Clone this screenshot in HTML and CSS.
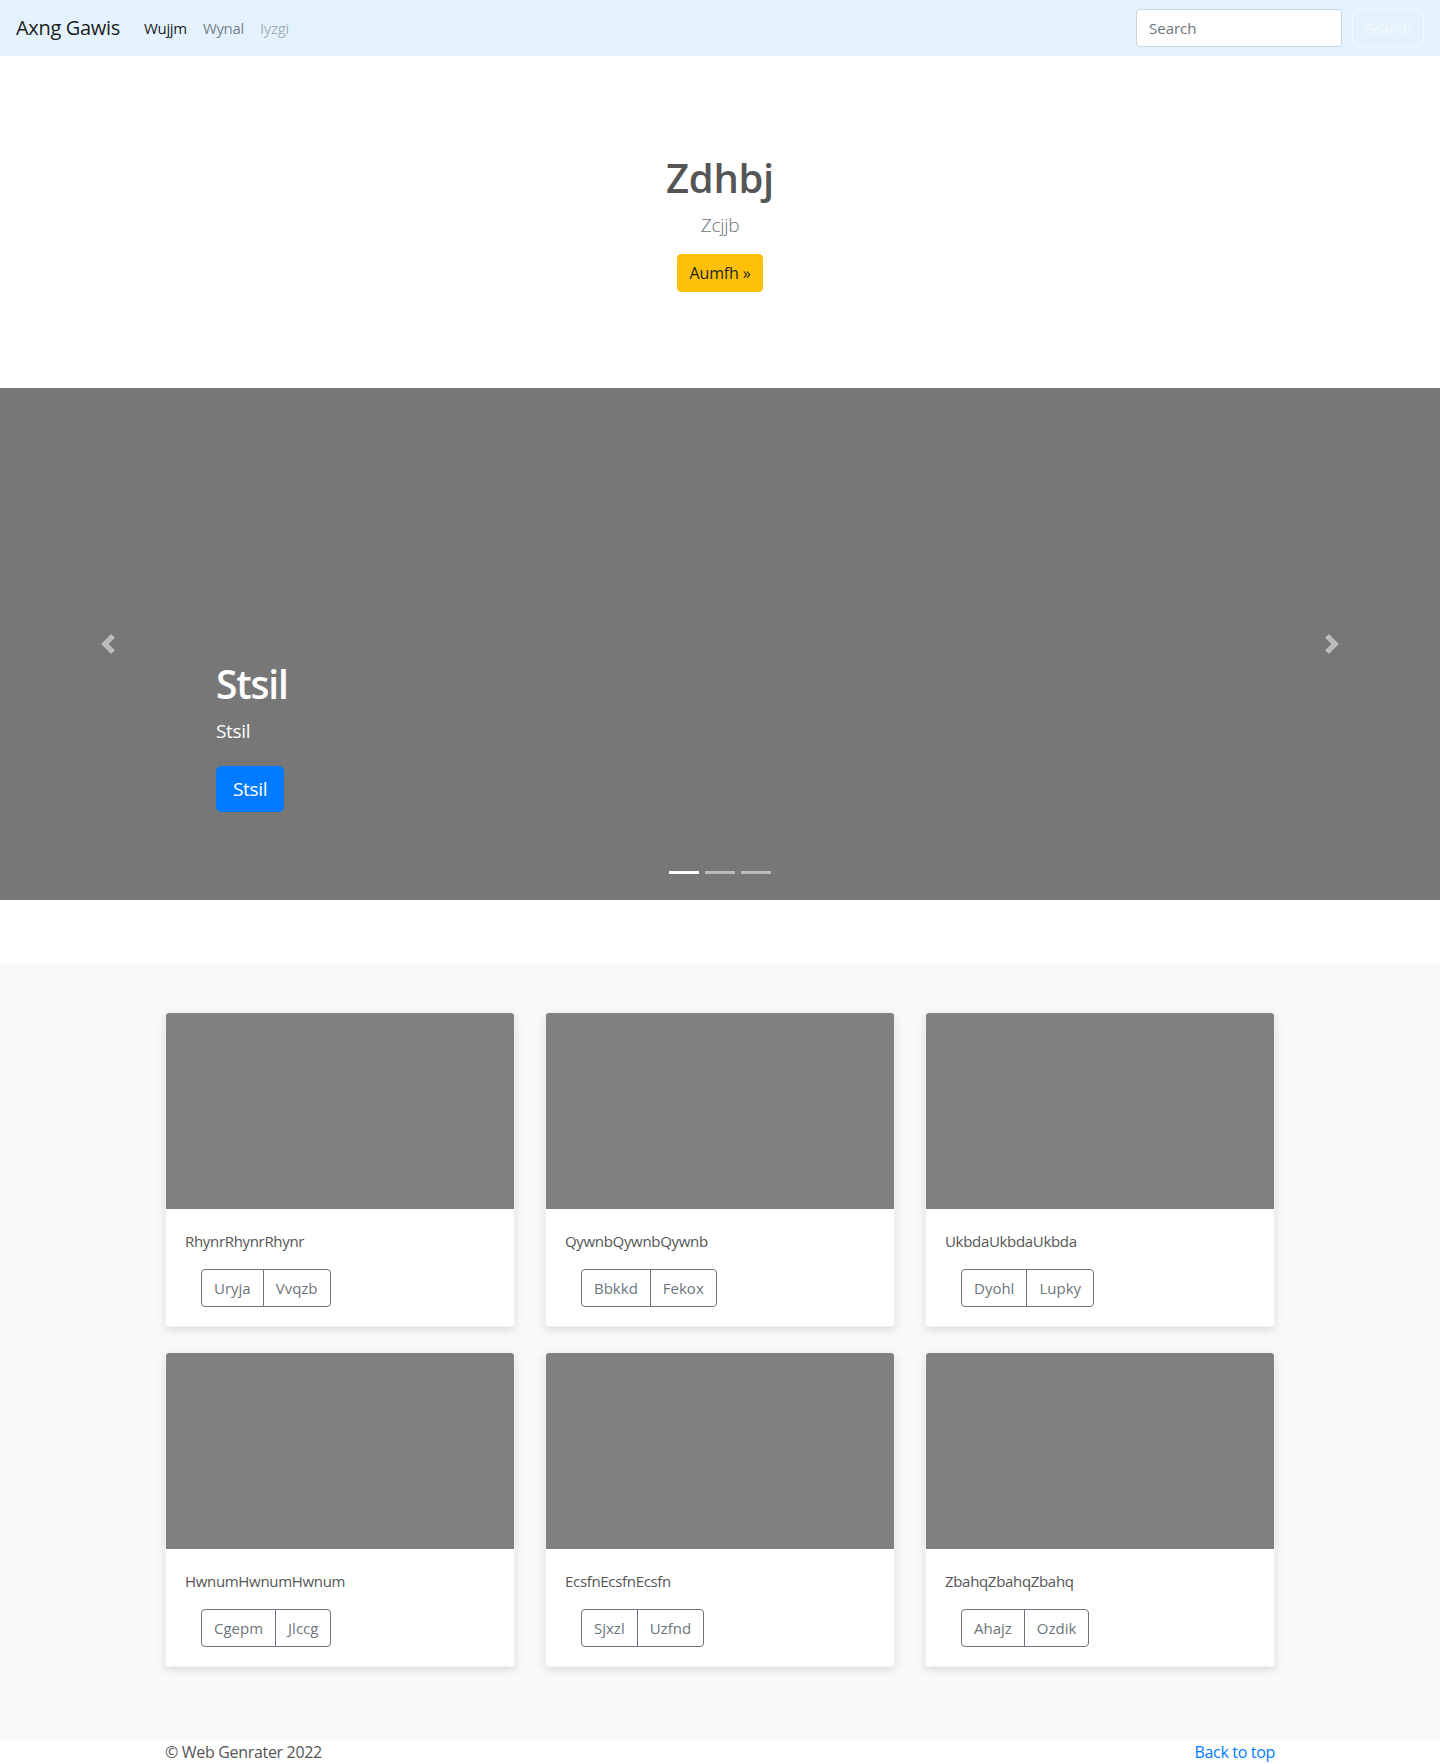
FILE: index.html
```html
<!DOCTYPE html>
<html lang="en">
<head>
<meta charset="utf-8">
<title>Axng Gawis</title>
<link rel="stylesheet" href="styles.css">
</head>
<body>
<header class="navbar">
  <a class="brand" href="#">Axng Gawis</a>
  <nav class="nav">
    <a class="nav-link active" href="#">Wujjm</a>
    <a class="nav-link" href="#">Wynal</a>
    <a class="nav-link disabled" href="#">Iyzgi</a>
  </nav>
  <form class="search">
    <input class="search-input" type="text" placeholder="Search">
    <button class="search-btn" type="button">Search</button>
  </form>
</header>

<section class="jumbotron">
  <h1 class="jumbo-title">Zdhbj</h1>
  <p class="lead">Zcjjb</p>
  <a class="btn btn-warning" href="#">Aumfh »</a>
</section>

<section class="carousel">
  <a class="carousel-control prev" href="#">
    <svg width="20" height="20" viewBox="0 0 8 8"><path fill="#fff" d="M5.25 0l-4 4 4 4 1.5-1.5L4.25 4l2.5-2.5L5.25 0z"/></svg>
  </a>
  <div class="carousel-caption">
    <h1 class="caption-title">Stsil</h1>
    <p class="caption-text">Stsil</p>
    <p class="caption-action"><a class="btn btn-lg btn-primary" href="#">Stsil</a></p>
  </div>
  <a class="carousel-control next" href="#">
    <svg width="20" height="20" viewBox="0 0 8 8"><path fill="#fff" d="M2.75 0l-1.5 1.5L3.75 4l-2.5 2.5L2.75 8l4-4-4-4z"/></svg>
  </a>
  <ol class="indicators">
    <li class="active"></li>
    <li></li>
    <li></li>
  </ol>
</section>

<main class="album">
  <div class="grid">
    <div class="card">
      <div class="card-img"></div>
      <div class="card-body">
        <p class="card-text">RhynrRhynrRhynr</p>
        <div class="card-actions"><div class="btn-group"><button class="btn-outline">Uryja</button><button class="btn-outline">Vvqzb</button></div></div>
      </div>
    </div>
    <div class="card">
      <div class="card-img"></div>
      <div class="card-body">
        <p class="card-text">QywnbQywnbQywnb</p>
        <div class="card-actions"><div class="btn-group"><button class="btn-outline">Bbkkd</button><button class="btn-outline">Fekox</button></div></div>
      </div>
    </div>
    <div class="card">
      <div class="card-img"></div>
      <div class="card-body">
        <p class="card-text">UkbdaUkbdaUkbda</p>
        <div class="card-actions"><div class="btn-group"><button class="btn-outline">Dyohl</button><button class="btn-outline">Lupky</button></div></div>
      </div>
    </div>
    <div class="card">
      <div class="card-img"></div>
      <div class="card-body">
        <p class="card-text">HwnumHwnumHwnum</p>
        <div class="card-actions"><div class="btn-group"><button class="btn-outline">Cgepm</button><button class="btn-outline">Jlccg</button></div></div>
      </div>
    </div>
    <div class="card">
      <div class="card-img"></div>
      <div class="card-body">
        <p class="card-text">EcsfnEcsfnEcsfn</p>
        <div class="card-actions"><div class="btn-group"><button class="btn-outline">Sjxzl</button><button class="btn-outline">Uzfnd</button></div></div>
      </div>
    </div>
    <div class="card">
      <div class="card-img"></div>
      <div class="card-body">
        <p class="card-text">ZbahqZbahqZbahq</p>
        <div class="card-actions"><div class="btn-group"><button class="btn-outline">Ahajz</button><button class="btn-outline">Ozdik</button></div></div>
      </div>
    </div>
  </div>
</main>

<footer class="footer">
  <p class="copy">© Web Genrater 2022</p>
  <a class="back" href="#">Back to top</a>
</footer>
</body>
</html>
```

FILE: styles.css
```css
* { box-sizing: border-box; }
html, body { margin: 0; padding: 0; }
body {
  font-family: "Open Sans", "Noto Sans", sans-serif;
  font-size: 16px;
  line-height: 1.5;
  color: #212529;
  background: #fff;
  letter-spacing: -0.02em;
}
a { text-decoration: none; }

/* navbar */
.navbar {
  height: 56px;
  background: #e3f2fd;
  display: flex;
  align-items: center;
  padding: 0 16px;
}
.brand {
  font-size: 20px;
  color: rgba(0,0,0,.9);
  margin-right: 16px;
  line-height: 30px;
}
.nav { display: flex; flex: 1; }
.nav-link {
  padding: 0 8px;
  color: rgba(0,0,0,.5);
  font-size: 15px;
}
.nav-link.active { color: rgba(0,0,0,.9); }
.nav-link.disabled { color: rgba(0,0,0,.3); }
.search { display: flex; align-items: center; }
.search-input {
  width: 206px;
  height: 38px;
  border: 1px solid #ced4da;
  border-radius: 4px;
  padding: 6px 12px;
  font: inherit;
  font-size: 15px;
  margin-right: 10px;
  background: #fff;
}
.search-input::placeholder { color: #6c757d; }
.search-btn {
  height: 38px;
  width: 72px;
  border: 1px solid #f8f9fa;
  border-radius: 4px;
  background: transparent;
  color: #f8f9fa;
  font: inherit;
  font-size: 15px;
  padding: 0 10px;
}

/* jumbotron */
.jumbotron {
  text-align: center;
  padding: 98px 0 96px;
}
.jumbo-title {
  margin: 0 0 8px;
  font-size: 40px;
  font-weight: 600;
  line-height: 48px;
  color: #555;
}
.lead {
  margin: 0 0 14px;
  font-size: 19px;
  font-weight: 300;
  line-height: 30px;
  color: #6c757d;
}
.btn {
  display: inline-block;
  border-radius: 4px;
  font-size: 16px;
  line-height: 24px;
  padding: 6px 12px;
  border: 1px solid transparent;
}
.btn-warning { background: #ffc107; border-color: #ffc107; color: #212529; letter-spacing: -0.01em; }

/* carousel */
.carousel {
  position: relative;
  height: 512px;
  background: #777;
  display: flex;
  justify-content: space-between;
  align-items: center;
}
.carousel-control {
  width: 15%;
  height: 100%;
  display: flex;
  align-items: center;
  justify-content: center;
  opacity: .5;
}
.carousel-control svg { display: block; }
.carousel-caption {
  position: absolute;
  left: 15%;
  right: 15%;
  bottom: 52px;
  padding: 20px 0;
  color: #fff;
  text-align: left;
}
.caption-title {
  margin: 0 0 8px;
  font-size: 39px;
  font-weight: 600;
  line-height: 48px;
  letter-spacing: -0.03em;
}
.caption-text {
  margin: 0 0 20px;
  font-size: 19px;
  line-height: 30px;
}
.caption-action { margin: 0 0 16px; }
.btn-lg { font-size: 19px; line-height: 30px; padding: 7px 16px; border-radius: 5px; }
.btn-primary { background: #007bff; border-color: #007bff; color: #fff; }
.indicators {
  position: absolute;
  left: 0;
  right: 0;
  bottom: 26px;
  margin: 0;
  padding: 0;
  list-style: none;
  display: flex;
  justify-content: center;
  gap: 6px;
}
.indicators li {
  width: 30px;
  height: 3px;
  background: #fff;
  opacity: .5;
}
.indicators li.active { opacity: 1; }

/* album */
.album {
  margin-top: 64px;
  background: #f8f9fa;
  padding: 48px 0 73px;
}
.grid {
  width: 1110px;
  margin: 0 auto;
  display: grid;
  grid-template-columns: repeat(3, 350px);
  column-gap: 30px;
  row-gap: 25px;
}
.card {
  background: #fff;
  border-radius: 4px;
  overflow: hidden;
  border: 1px solid rgba(0,0,0,.05);
  box-shadow: 0 3px 10px rgba(0,0,0,.12);
}
.card-img {
  height: 196px;
  background: #808080;
}
.card-body { padding: 20px 19px 19px; }
.card-text {
  margin: 0 0 16px;
  font-size: 15px;
  line-height: 24px;
  color: #555;
}
.card-actions { padding: 0 0 0 16px; }
.btn-group { display: inline-flex; }
.btn-outline {
  height: 38px;
  padding: 0 12px;
  border: 1px solid #6c757d;
  background: #fff;
  color: #6c757d;
  font: inherit;
  font-size: 15px;
}
.btn-outline:first-child { border-radius: 4px 0 0 4px; }
.btn-outline:last-child { border-radius: 0 4px 4px 0; margin-left: -1px; }

/* footer */
.footer {
  width: 1110px;
  margin: 0 auto;
  display: flex;
  justify-content: space-between;
  padding: 0 0 48px;
  font-size: 16px;
  line-height: 24px;
  letter-spacing: -0.02em;
}
.copy { margin: 0; color: #555; }
.back { color: #007bff; }
```
